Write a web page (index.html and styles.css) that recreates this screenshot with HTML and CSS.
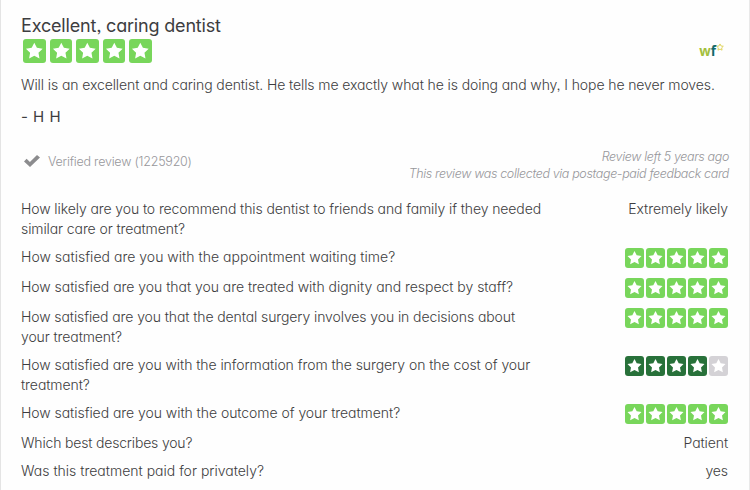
FILE: index.html
```html
<!DOCTYPE html>
<html lang="en">

<head>
    <meta charset="UTF-8">
    <title>Excellent, caring dentist</title>
    <meta name="viewport" content="width=device-width, initial-scale=1.0">
    <link rel="stylesheet" href="styles.css">
</head>

<body>
    <!-- Star shared by all the ratings -->
    <svg class="sprite" width="0" height="0">
        <symbol id="star" viewBox="0 0 20 20">
            <path d="M10 2.6l2.3 4.6 5.1.7-3.7 3.6.9 5.1L10 14.2l-4.6 2.4.9-5.1L2.6 7.9l5.1-.7z" />
        </symbol>
    </svg>

    <article class="review">
        <h1 class="title">Excellent, caring dentist</h1>
        <div class="rating">
            <div class="stars stars-large">
                <svg><use href="#star" /></svg>
                <svg><use href="#star" /></svg>
                <svg><use href="#star" /></svg>
                <svg><use href="#star" /></svg>
                <svg><use href="#star" /></svg>
            </div>
            <div class="logo">
                <span class="logo-w">w</span><span class="logo-f">f</span>
                <svg class="logo-star" viewBox="1 1 18 17"><use href="#star" width="20" height="20" /></svg>
            </div>
        </div>

        <p class="comment">Will is an excellent and caring dentist. He tells me exactly what he is doing and why, I hope he never moves.</p>
        <p class="author">- H H</p>

        <div class="meta">
            <div class="verified">
                <svg class="check" viewBox="0 0 16 12"><path d="M0 6.4l2.6-2.6 3.3 3.1L13 0l3 2.5L6 12z" /></svg>
                <span>Verified review (1225920)</span>
            </div>
            <div class="source">
                <p class="date">Review left 5 years ago</p>
                <p class="collected">This review was collected via postage-paid feedback card</p>
            </div>
        </div>

        <dl class="answers">
            <div class="row">
                <dt>How likely are you to recommend this dentist to friends and family if they needed<br>similar care or treatment?</dt>
                <dd>Extremely likely</dd>
            </div>
            <div class="row">
                <dt class="waiting">How satisfied are you with the appointment waiting time?</dt>
                <dd class="stars">
                    <svg><use href="#star" /></svg>
                    <svg><use href="#star" /></svg>
                    <svg><use href="#star" /></svg>
                    <svg><use href="#star" /></svg>
                    <svg><use href="#star" /></svg>
                </dd>
            </div>
            <div class="row">
                <dt class="dignity">How satisfied are you that you are treated with dignity and respect by staff?</dt>
                <dd class="stars">
                    <svg><use href="#star" /></svg>
                    <svg><use href="#star" /></svg>
                    <svg><use href="#star" /></svg>
                    <svg><use href="#star" /></svg>
                    <svg><use href="#star" /></svg>
                </dd>
            </div>
            <div class="row">
                <dt>How satisfied are you that the dental surgery involves you in decisions about<br>your treatment?</dt>
                <dd class="stars">
                    <svg><use href="#star" /></svg>
                    <svg><use href="#star" /></svg>
                    <svg><use href="#star" /></svg>
                    <svg><use href="#star" /></svg>
                    <svg><use href="#star" /></svg>
                </dd>
            </div>
            <div class="row">
                <dt class="cost">How satisfied are you with the information from the surgery on the cost of your<br>treatment?</dt>
                <dd class="stars stars-four">
                    <svg><use href="#star" /></svg>
                    <svg><use href="#star" /></svg>
                    <svg><use href="#star" /></svg>
                    <svg><use href="#star" /></svg>
                    <svg class="off"><use href="#star" /></svg>
                </dd>
            </div>
            <div class="row">
                <dt class="outcome">How satisfied are you with the outcome of your treatment?</dt>
                <dd class="stars">
                    <svg><use href="#star" /></svg>
                    <svg><use href="#star" /></svg>
                    <svg><use href="#star" /></svg>
                    <svg><use href="#star" /></svg>
                    <svg><use href="#star" /></svg>
                </dd>
            </div>
            <div class="row">
                <dt class="describes">Which best describes you?</dt>
                <dd>Patient</dd>
            </div>
            <div class="row">
                <dt class="private">Was this treatment paid for privately?</dt>
                <dd>yes</dd>
            </div>
        </dl>
    </article>
</body>

</html>
```
FILE: styles.css
```css
/* Reset */

* {
    padding: 0;
    margin: 0;
    box-sizing: border-box;
}

body {
    height: 100vh;
    overflow: hidden;
    background-color: #fefefe;
    color: #3d3d40;
    font-family: Inter, "Open Sans", sans-serif;
    font-size: 14px;
    font-weight: 300;
    line-height: 20px;
    letter-spacing: -0.1px;
    /* single-storey a */
    font-feature-settings: "cv11", "ss03";
}

.sprite {
    display: block;
}

.review {
    height: 100vh;
    padding: 13px 20px 0;
    border-left: 1px solid #e4e4e4;
    border-right: 1px solid #e9e9e9;
}

/* Heading and overall rating */

.title {
    font-size: 18px;
    font-weight: 400;
    line-height: 25px;
    letter-spacing: -0.18px;
}

.rating {
    display: flex;
    justify-content: space-between;
    height: 26px;
    padding: 1px 5px 0 2px;
}

.stars {
    display: flex;
    gap: 2px;
}

.stars svg {
    width: 19px;
    height: 20px;
    border-radius: 3px;
    background-color: #78d65b;
    fill: #fff;
}

.stars-large {
    gap: 4px;
}

.stars-large svg {
    width: 22.6px;
    height: 24px;
}

.stars-four svg {
    background-color: #28713a;
}

.stars .off {
    background-color: #d4d2d6;
}

.logo {
    display: flex;
    padding-top: 2px;
    font-family: "Open Sans", sans-serif;
    font-size: 13.5px;
    font-weight: 700;
    letter-spacing: 0;
}

.logo-w {
    color: #a3bf3c;
}

.logo-f {
    color: #126a6c;
}

.logo-star {
    width: 8px;
    height: 8px;
    margin-top: 2px;
    fill: none;
    stroke: #dfd35a;
    stroke-width: 2.2;
}

/* Comment */

.comment {
    margin-top: 11px;
}

.author {
    margin-top: 12px;
    font-size: 15px;
    font-weight: 400;
    letter-spacing: 0.5px;
}

/* Verification and source */

.meta {
    display: flex;
    justify-content: space-between;
    margin-top: 21px;
    color: #97979b;
}

.verified {
    display: flex;
    gap: 8px;
    padding: 4px 0 0 3px;
    font-size: 12.5px;
    letter-spacing: -0.22px;
}

.check {
    width: 16px;
    height: 12px;
    margin-top: 3px;
    fill: #8c8c8e;
}

.source {
    font-size: 12.5px;
    font-style: italic;
    line-height: 17px;
    letter-spacing: -0.36px;
    text-align: right;
}

/* Questions and answers */

.answers {
    display: flex;
    flex-direction: column;
    gap: 8px;
    margin-top: 17px;
}

.row {
    display: flex;
    justify-content: space-between;
    padding-right: 1px;
    white-space: nowrap;
}

.row .stars {
    height: 22px;
    padding-top: 1px;
}

.waiting {
    letter-spacing: 0.02px;
}

.dignity {
    letter-spacing: -0.035px;
}

.cost {
    letter-spacing: -0.065px;
}

.outcome {
    letter-spacing: -0.05px;
}

.describes {
    letter-spacing: -0.18px;
}

.private {
    letter-spacing: 0;
}
```
